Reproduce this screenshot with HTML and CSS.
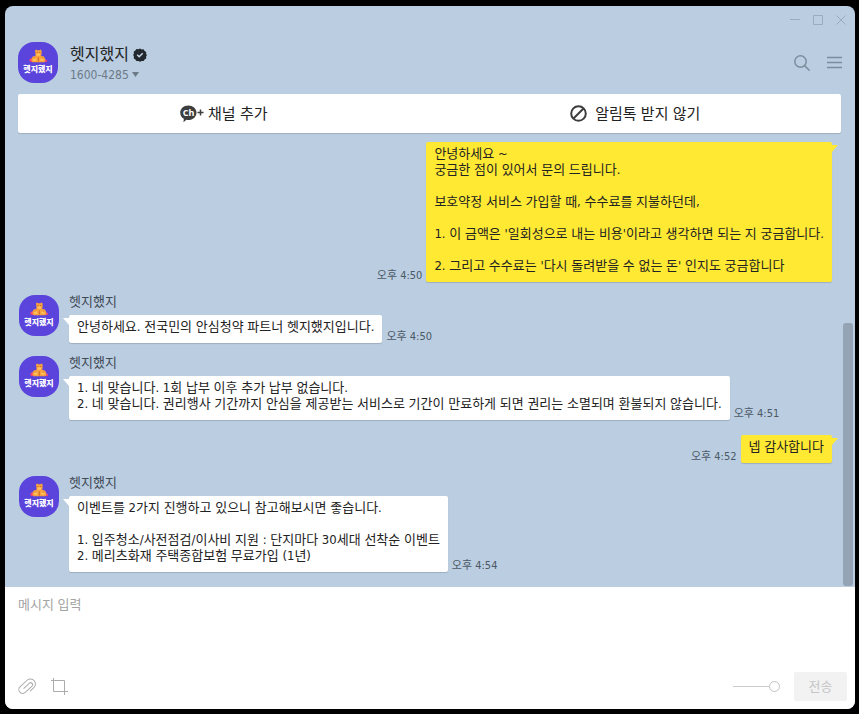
FILE: index.html
```html
<!DOCTYPE html>
<html lang="ko">
<head>
    <meta charset="UTF-8">
    <title>헷지했지</title>
    <link rel="stylesheet" href="styles.css">
</head>
<body>
<svg class="defs" aria-hidden="true">
    <symbol id="bears" viewBox="0 0 20 14">
        <path fill="#e8437f" d="M1 10.500l2.500-1.500 1.500 4H2zM17.500 10.500l1.800.5-.5 2h-2z"/>
        <path fill="#f9a13c" d="M7 1.500L8 .500l1.300.8h2L12.600.500l1 1v3.300l-.4 2.200 2.300.2 1.500 2 .5 2-1 2H4.500l-1.200-2 .5-2.300L5 7.300l2.300-.1L7.500 5z"/>
        <path fill="#ffc25e" d="M8.500 4.500h3.500v2.200H8.500zM5 9.500h3.300v2.300H5zM12.300 9.500h3.300v2.300h-3.300z"/>
        <path fill="#c9622e" d="M8.600 3h1v1h-1zM11.200 3h1v1h-1zM9.800 8.300h.9v4.500h-.9zM5.500 8.800h.8v.8h-.8zM14.200 8.800h.8v.8h-.8z"/>
    </symbol>
</svg>
<div class="window">
    <header class="top">
        <div class="controls">
            <button type="button" class="icon-btn" aria-label="최소화">
                <svg width="10" height="11"><path d="M0 5.500h10"/></svg>
            </button>
            <button type="button" class="icon-btn" aria-label="최대화">
                <svg width="10" height="10"><path d="M.500.500h9v9h-9z"/></svg>
            </button>
            <button type="button" class="icon-btn" aria-label="닫기">
                <svg width="10" height="10"><path d="M.500.500l9 9M9.500.500l-9 9"/></svg>
            </button>
        </div>
        <div class="profile">
            <div class="avatar"><svg class="bears"><use href="#bears"/></svg><span>헷지했지</span></div>
            <div class="info">
                <h1>헷지했지
                    <svg width="14" height="14" viewBox="0 0 14 14"><path fill="#22282e" d="M7 .500l1.700.9 1.900-.1 1 1.700 1.600 1-.1 1.900L14 7l-.9 1.500.1 1.900-1.600 1-1 1.700-1.900-.1L7 13.800 5.300 13l-1.900.1-1-1.700-1.600-1 .1-1.900L.200 7l.7-1.500L.800 3.600l1.600-1 1-1.500 1.900.1z"/><path fill="none" stroke="#c8d8e8" stroke-width="1.500" d="M4.200 6.800l2 2 3.500-3.500"/></svg>
                </h1>
                <button type="button" class="phone">1600-4285
                    <svg width="8" height="5"><path d="M0 0h7L3.500 5z"/></svg>
                </button>
            </div>
            <div class="tools">
                <button type="button" class="icon-btn" aria-label="검색">
                    <svg width="16" height="16"><circle cx="6.500" cy="6.500" r="5.700"/><path d="M10.600 10.600l5 5"/></svg>
                </button>
                <button type="button" class="icon-btn" aria-label="메뉴">
                    <svg width="15" height="13"><path d="M0 1.500h15M0 6.500h15M0 11.500h15"/></svg>
                </button>
            </div>
        </div>
        <div class="actions">
            <button type="button">
                <svg width="24" height="18" viewBox="0 0 24 18"><path fill="#3d3d3d" d="M8.300.500c4.600 0 8.200 3.200 8.200 7.200s-3.600 7.300-8.200 7.300c-.7 0-1.300 0-1.900-.2L3.500 17.300l.3-3.500C1.600 12.500.200 10.300.200 7.700.200 3.700 3.700.500 8.300.500z"/><text x="8.500" y="11" text-anchor="middle">Ch</text><path stroke="#3d3d3d" stroke-width="1.500" d="M17.500 7.500h6M20.500 4.500v6"/></svg>
                채널 추가
            </button>
            <button type="button">
                <svg class="block" width="17" height="17"><circle cx="8.500" cy="8.500" r="7.300"/><path d="M3.500 13.500l10-10"/></svg>
                알림톡 받지 않기
            </button>
        </div>
    </header>

    <main class="chat">
        <div class="row sent">
            <time>오후 4:50</time>
            <p class="bubble">안녕하세요 ~
궁금한 점이 있어서 문의 드립니다.

보호약정 서비스 가입할 때, 수수료를 지불하던데,

1. 이 금액은 '일회성으로 내는 비용'이라고 생각하면 되는 지 궁금합니다.

2. 그리고 수수료는 '다시 돌려받을 수 없는 돈' 인지도 궁금합니다</p>
        </div>
        <div class="row">
            <div class="avatar"><svg class="bears"><use href="#bears"/></svg><span>헷지했지</span></div>
            <div class="content">
                <div class="name">헷지했지</div>
                <div class="line">
                    <p class="bubble">안녕하세요. 전국민의 안심청약 파트너 헷지했지입니다.</p>
                    <time>오후 4:50</time>
                </div>
            </div>
        </div>
        <div class="row">
            <div class="avatar"><svg class="bears"><use href="#bears"/></svg><span>헷지했지</span></div>
            <div class="content">
                <div class="name">헷지했지</div>
                <div class="line">
                    <p class="bubble">1. 네 맞습니다. 1회 납부 이후 추가 납부 없습니다.
2. 네 맞습니다. 권리행사 기간까지 안심을 제공받는 서비스로 기간이 만료하게 되면 권리는 소멸되며 환불되지 않습니다.</p>
                    <time>오후 4:51</time>
                </div>
            </div>
        </div>
        <div class="row sent">
            <time>오후 4:52</time>
            <p class="bubble">넵 감사합니다</p>
        </div>
        <div class="row">
            <div class="avatar"><svg class="bears"><use href="#bears"/></svg><span>헷지했지</span></div>
            <div class="content">
                <div class="name">헷지했지</div>
                <div class="line">
                    <p class="bubble">이벤트를 2가지 진행하고 있으니 참고해보시면 좋습니다.

1. 입주청소/사전점검/이사비 지원 : 단지마다 30세대 선착순 이벤트
2. 메리츠화재 주택종합보험 무료가입 (1년)</p>
                    <time>오후 4:54</time>
                </div>
            </div>
        </div>
        <div class="scrollbar"></div>
    </main>

    <form class="composer">
        <textarea placeholder="메시지 입력" aria-label="메시지 입력"></textarea>
        <div class="toolbar">
            <button type="button" class="icon-btn" aria-label="파일 첨부">
                <svg width="19" height="18" viewBox="0 0 19 18"><path transform="translate(9.200 8.700) rotate(-43)" d="M-1 5.200H4.300a5 5 0 0 0 0-10H-5.300a3.800 3.800 0 0 0 0 7.600H4a1.900 1.900 0 0 0 0-3.800H-4"/></svg>
            </button>
            <button type="button" class="icon-btn" aria-label="화면 캡처">
                <svg width="17" height="17"><path d="M2.500 0v13.500H17M0 2.500h13.500V17"/></svg>
            </button>
            <input type="range" class="opacity" min="0" max="100" value="100" aria-label="투명도">
            <button type="submit" class="send" disabled>전송</button>
        </div>
    </form>
</div>
</body>
</html>
```

FILE: styles.css
```css
*{
    box-sizing: border-box;
}
body{
    margin: 0;
    padding: 6px 4px 5px 5px;
    height: 100vh;
    background-color: #000;
    font-family: "DejaVu Sans Condensed", "Noto Sans CJK KR", sans-serif;
    font-size: 13px;
    line-height: 16px;
    color: #222;
}
h1, p{
    margin: 0;
    font-weight: normal;
}
button, textarea{
    font: inherit;
    border: 0;
    padding: 0;
    background: none;
    color: inherit;
}
svg{
    display: block;
}
.defs{
    position: absolute;
    width: 0;
    height: 0;
}
.window{
    display: flex;
    flex-direction: column;
    height: 100%;
    border-radius: 8px;
    overflow: hidden;
    background-color: #bacde1;
}

/* header */
.controls{
    display: flex;
    justify-content: flex-end;
    align-items: center;
    gap: 13px;
    height: 27px;
    padding-right: 9px;
}
.icon-btn svg{
    fill: none;
    stroke: #9badbd;
}
.profile{
    display: flex;
    align-items: center;
    gap: 12px;
    padding: 9px 13px 11px;
}
.avatar{
    display: flex;
    flex-direction: column;
    align-items: center;
    flex: none;
    width: 40px;
    height: 41px;
    padding-top: 7px;
    border-radius: 16px;
    background-color: #5a44dc;
}
.avatar span{
    color: #fff;
    font-size: 8px;
    font-weight: 900;
    line-height: 14px;
    white-space: nowrap;
}
.bears{
    width: 20px;
    height: 14px;
}
.info{
    flex: 1;
}
.info h1{
    display: flex;
    align-items: center;
    gap: 4px;
    font-size: 16px;
    line-height: 24px;
}
.phone{
    display: flex;
    align-items: center;
    gap: 3px;
    font-size: 12px;
    color: #6c7a88;
}
.phone svg{
    fill: #6c7a88;
}
.tools{
    display: flex;
    align-items: center;
    gap: 17px;
}
.tools svg{
    stroke: #7c8d9c;
    stroke-width: 1.5;
}
.actions{
    display: flex;
    height: 39px;
    margin: 0 14px 0 13px;
    border-radius: 2px;
    background-color: #fff;
    box-shadow: 0 1px 1px rgba(0, 0, 0, 0.15);
}
.actions button{
    display: flex;
    flex: 1;
    align-items: center;
    justify-content: center;
    gap: 4px;
    font-size: 15px;
}
.actions text{
    fill: #fff;
    font: bold 9px "Open Sans", sans-serif;
}
.actions .block{
    margin-right: 4px;
    fill: none;
    stroke: #3d3d3d;
    stroke-width: 2;
}

/* messages */
.chat{
    position: relative;
    display: flex;
    flex: 1;
    flex-direction: column;
    gap: 13px;
    min-height: 0;
    padding: 7px 23px 15px 14px;
    overflow: hidden;
}
.row{
    display: flex;
    gap: 10px;
}
.row.sent{
    justify-content: flex-end;
    align-items: flex-end;
    gap: 4px;
    margin-top: 2px;
}
.name{
    height: 20px;
    line-height: 14px;
    color: #3f4a55;
}
.line{
    display: flex;
    align-items: flex-end;
    gap: 4px;
}
.bubble{
    position: relative;
    padding: 4px 8px 8px;
    border-radius: 2px;
    background-color: #fff;
    box-shadow: 0 1px 1px rgba(0, 0, 0, 0.15);
    white-space: pre-wrap;
}
.bubble::before{
    content: "";
    position: absolute;
    top: 3px;
    left: -6px;
    width: 6px;
    height: 7px;
    background-color: inherit;
    clip-path: polygon(0 0, 100% 0, 100% 100%);
}
.sent .bubble{
    background-color: #ffe933;
}
.sent .bubble::before{
    left: auto;
    right: -6px;
    clip-path: polygon(0 0, 100% 0, 0 100%);
}
time{
    flex: none;
    font-size: 11px;
    line-height: 12px;
    color: #4c5966;
}
.scrollbar{
    position: absolute;
    right: 2px;
    bottom: 1px;
    width: 10px;
    height: 58%;
    border-radius: 3px;
    background-color: #94a4b4;
}

/* composer */
.composer{
    display: flex;
    flex-direction: column;
    height: 122px;
    padding: 10px 8px 8px 13px;
    background-color: #fff;
}
.composer textarea{
    flex: 1;
    resize: none;
    outline: none;
}
.composer textarea::placeholder{
    color: #a3a3a3;
}
.toolbar{
    display: flex;
    align-items: center;
    gap: 14px;
}
.toolbar .icon-btn svg{
    stroke: #acacac;
}
.opacity{
    appearance: none;
    width: 47px;
    height: 11px;
    margin: 0 0 0 auto;
    background: linear-gradient(#ccc, #ccc) 0 5px / 37px 1px no-repeat;
}
.opacity::-webkit-slider-thumb{
    appearance: none;
    width: 11px;
    height: 11px;
    border: 1px solid #c4c4c4;
    border-radius: 50%;
    background-color: #fff;
}
.send{
    width: 53px;
    height: 29px;
    border-radius: 2px;
    background-color: #f2f2f2;
    color: #c6c6c6;
}
```
